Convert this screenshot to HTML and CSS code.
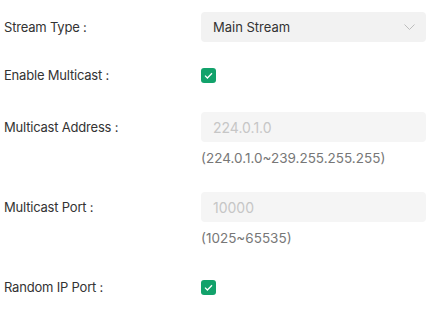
FILE: index.html
```html
<!DOCTYPE html>
<html lang="en">
<head>
  <meta charset="UTF-8">
  <meta name="viewport" content="width=device-width, initial-scale=1.0">
  <title>Multicast</title>
  <link rel="stylesheet" href="styles.css">
</head>
<body>

<div class="form">
  <div class="row first">
    <label class="label">Stream Type :</label>
    <div class="control">
      <div class="select">
        <span>Main Stream</span>
        <svg class="arrow" width="11" height="6" viewBox="0 0 11 6"><path d="M0.5 0.5 L5.5 5.5 L10.5 0.5" fill="none" stroke="#bdbdbd" stroke-width="1"/></svg>
      </div>
    </div>
  </div>

  <div class="row check-row">
    <label class="label">Enable Multicast :</label>
    <div class="control">
      <span class="checkbox">
        <svg width="15" height="15" viewBox="0 0 15 15"><path d="M4 7.6 L6.4 10 L11 5.2" fill="none" stroke="#fff" stroke-width="1.3"/></svg>
      </span>
    </div>
  </div>

  <div class="row addr-row">
    <label class="label">Multicast Address :</label>
    <div class="control">
      <input class="input" type="text" placeholder="224.0.1.0" disabled>
      <div class="hint">(224.0.1.0~239.255.255.255)</div>
    </div>
  </div>

  <div class="row">
    <label class="label">Multicast Port :</label>
    <div class="control">
      <input class="input" type="text" placeholder="10000" disabled>
      <div class="hint">(1025~65535)</div>
    </div>
  </div>

  <div class="row">
    <label class="label">Random IP Port :</label>
    <div class="control">
      <span class="checkbox">
        <svg width="15" height="15" viewBox="0 0 15 15"><path d="M4 7.6 L6.4 10 L11 5.2" fill="none" stroke="#fff" stroke-width="1.3"/></svg>
      </span>
    </div>
  </div>
</div>

</body>
</html>
```

FILE: styles.css
```css
* {
  margin: 0;
  padding: 0;
  box-sizing: border-box;
}
body {
  font-family: Inter, "Noto Sans", sans-serif;
  font-size: 13px;
  color: #333;
  background-color: #fff;
}
.form {
  padding: 12px 0 0 4px;
}
.row {
  display: grid;
  grid-template-columns: 197px 225px;
  margin-top: 24px;
}
.row.first { margin-top: 0; }
.row.check-row { margin-top: 18px; }
.row.addr-row { margin-top: 22px; }
.label {
  line-height: 30px;
  color: #333;
  letter-spacing: -0.2px;
}
.control {
  display: flex;
  flex-direction: column;
  min-height: 30px;
  justify-content: flex-start;
}
.select {
  height: 30px;
  background-color: #f2f2f2;
  border-radius: 4px;
  display: flex;
  align-items: center;
  justify-content: space-between;
  padding: 0 11px 0 12px;
  color: #333;
}
.input {
  height: 30px;
  width: 100%;
  background-color: #f5f5f5;
  border: none;
  border-radius: 4px;
  padding: 0 12px;
  font-family: inherit;
  font-size: 14px;
}
.input::placeholder {
  color: #c6c6c6;
}
.hint {
  margin-top: 6px;
  line-height: 20px;
  font-size: 13.5px;
  color: #777;
}
.checkbox {
  width: 15px;
  height: 15px;
  margin-top: 7.5px;
  background-color: #12a26b;
  border-radius: 3px;
  display: flex;
}
```
